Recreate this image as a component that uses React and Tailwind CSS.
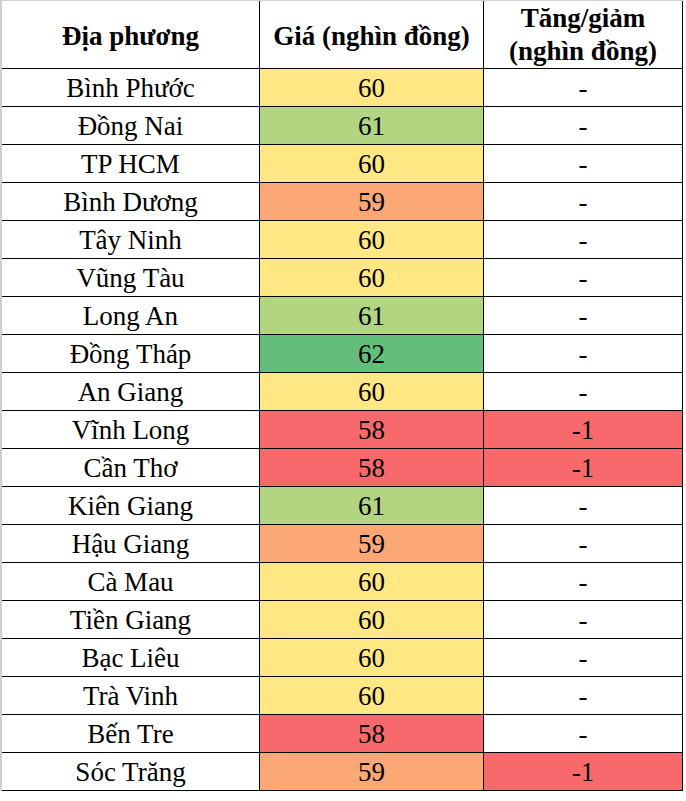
import React from 'react';

const rows = [
  ['Bình Phước', 60, '-'],
  ['Đồng Nai', 61, '-'],
  ['TP HCM', 60, '-'],
  ['Bình Dương', 59, '-'],
  ['Tây Ninh', 60, '-'],
  ['Vũng Tàu', 60, '-'],
  ['Long An', 61, '-'],
  ['Đồng Tháp', 62, '-'],
  ['An Giang', 60, '-'],
  ['Vĩnh Long', 58, '-1'],
  ['Cần Thơ', 58, '-1'],
  ['Kiên Giang', 61, '-'],
  ['Hậu Giang', 59, '-'],
  ['Cà Mau', 60, '-'],
  ['Tiền Giang', 60, '-'],
  ['Bạc Liêu', 60, '-'],
  ['Trà Vinh', 60, '-'],
  ['Bến Tre', 58, '-'],
  ['Sóc Trăng', 59, '-1'],
];

// màu theo giá, kiểu color scale của Excel
const priceBg = {
  58: 'bg-[#f8696b]',
  59: 'bg-[#fba876]',
  60: 'bg-[#ffe884]',
  61: 'bg-[#b1d580]',
  62: 'bg-[#63be7b]',
};

export default function App() {
  return (
    <div className="w-[686px] h-[801px] bg-white text-black font-['Liberation_Serif','Times_New_Roman',serif]">
      <div className="w-[683px] border-l-2 border-t border-[#cfcfcf]">
        <div className="grid grid-cols-[258px_224px_199px] text-[27px]">
          {/* Header */}
          <div className="h-[68px] pt-[3px] border-r border-b border-black flex items-center justify-center font-bold">
            Địa phương
          </div>
          <div className="h-[68px] pt-[3px] border-r border-b border-black flex items-center justify-center font-bold">
            Giá (nghìn đồng)
          </div>
          <div className="h-[68px] border-r border-b border-black flex flex-col items-center justify-center font-bold leading-[33px]">
            <span>Tăng/giảm</span>
            <span>(nghìn đồng)</span>
          </div>

          {rows.map(([name, price, change]) => (
            <React.Fragment key={name}>
              <div className="h-[38px] pt-[2px] border-r border-b border-black flex items-center justify-center">
                {name}
              </div>
              <div className={`h-[38px] pt-[2px] border-r border-b border-black flex items-center justify-center ${priceBg[price]}`}>
                {price}
              </div>
              <div
                className={`h-[38px] pt-[2px] border-r border-b border-black flex items-center justify-center ${
                  change === '-1' ? 'bg-[#f8696b]' : ''
                }`}
              >
                {change}
              </div>
            </React.Fragment>
          ))}
        </div>
      </div>
    </div>
  );
}
